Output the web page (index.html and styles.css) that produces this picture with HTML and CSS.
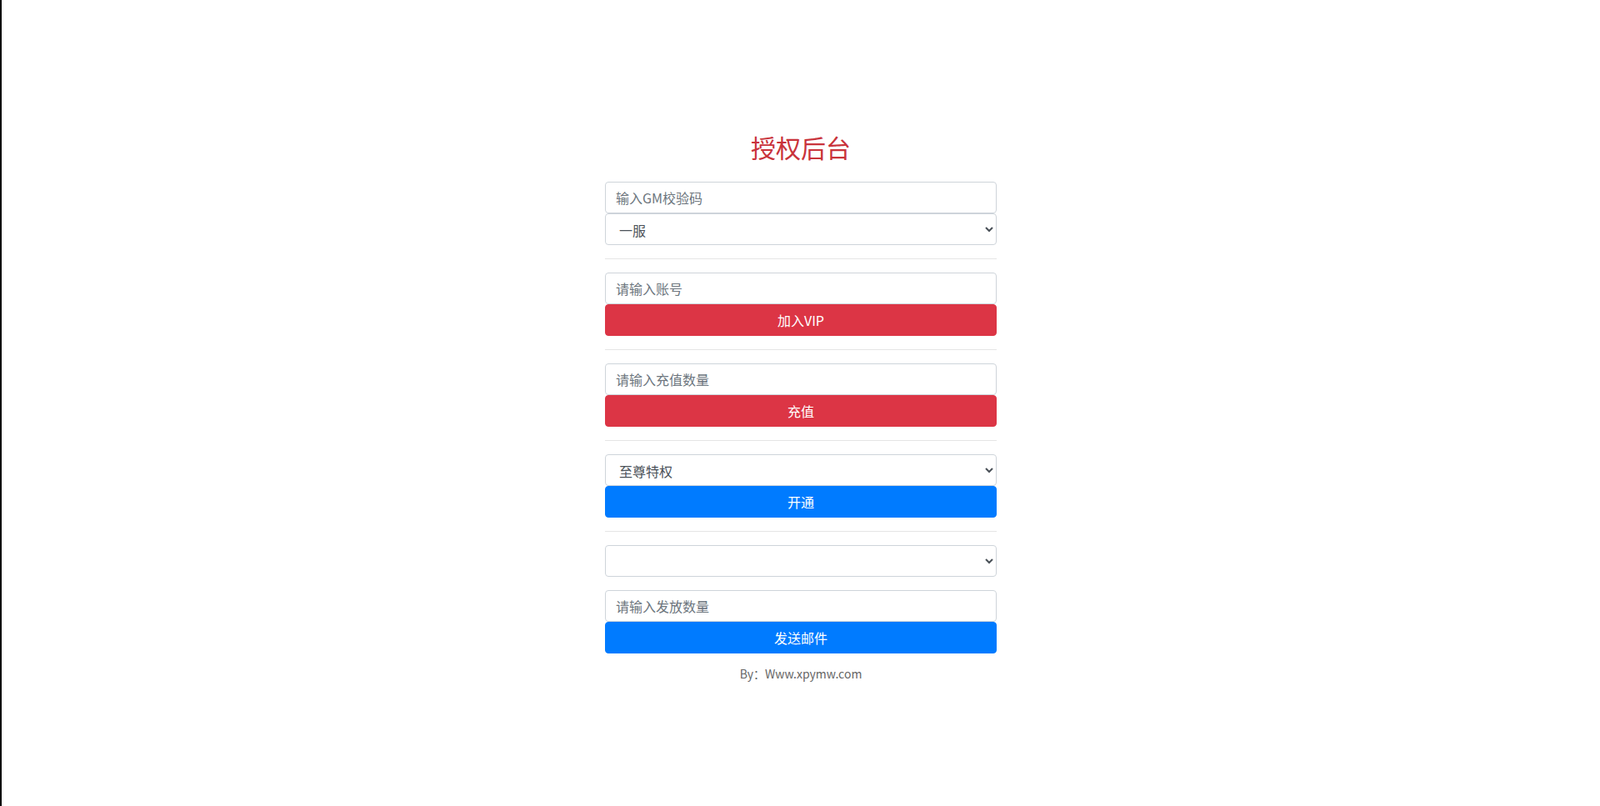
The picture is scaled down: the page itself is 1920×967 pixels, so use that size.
FILE: index.html
```html
<!DOCTYPE html>
<html>
<head>
  <meta charset="UTF-8">
  <title>授权后台</title>
  <link rel="stylesheet" href="styles.css">
</head>
<body>
  <div id="panel">
    <h2 class="title">授权后台</h2>

    <input type="text" class="form-control" id="gm-code" placeholder="输入GM校验码">
    <select class="form-control" id="server">
      <option>一服</option>
    </select>

    <hr>

    <input type="text" class="form-control" id="account" placeholder="请输入账号">
    <button class="btn btn-danger" id="vip-btn">加入VIP</button>

    <hr>

    <input type="text" class="form-control" id="amount" placeholder="请输入充值数量">
    <button class="btn btn-danger" id="charge-btn">充值</button>

    <hr>

    <select class="form-control" id="privilege">
      <option>至尊特权</option>
    </select>
    <button class="btn btn-primary" id="open-btn">开通</button>

    <hr>

    <select class="form-control spaced" id="item"></select>
    <input type="text" class="form-control" id="mail-count" placeholder="请输入发放数量">
    <button class="btn btn-primary" id="mail-btn">发送邮件</button>

    <div id="footer">By：Www.xpymw.com</div>
  </div>
</body>
</html>
```

FILE: styles.css
```css
html {
  border-left: 2px solid #000;
  min-height: 100%;
  box-sizing: border-box;
}
body {
  margin: 0;
  font-family: "Segoe UI", "Noto Sans CJK SC", sans-serif;
  font-size: 16px;
  line-height: 1.5;
  color: #212529;
  background: #fff;
}
#panel {
  width: 470px;
  margin: 0 auto;
  padding-top: 158px;
}
.title {
  margin: 0 0 24px;
  font-size: 30px;
  font-weight: normal;
  line-height: 36px;
  text-align: center;
  color: #c9333b;
}
.form-control {
  display: block;
  width: 100%;
  height: 38px;
  box-sizing: border-box;
  padding: 6px 12px;
  font-family: inherit;
  font-size: 16px;
  line-height: 1.5;
  color: #495057;
  background: #fff;
  border: 1px solid #ced4da;
  border-radius: 4px;
  margin: 0;
}
.form-control::placeholder {
  color: #6c757d;
}
.spaced {
  margin-bottom: 16px;
}
hr {
  margin: 16px 0;
  border: 0;
  border-top: 1px solid rgba(0, 0, 0, 0.1);
}
.btn {
  display: block;
  width: 100%;
  height: 38px;
  padding: 6px 12px;
  font-family: inherit;
  font-size: 16px;
  line-height: 1.5;
  color: #fff;
  border: 1px solid transparent;
  border-radius: 4px;
  cursor: pointer;
}
.btn-danger {
  background-color: #dc3545;
  border-color: #dc3545;
}
.btn-primary {
  background-color: #007bff;
  border-color: #007bff;
}
#footer {
  margin-top: 14px;
  font-size: 14px;
  text-align: center;
  color: #666;
}
```
